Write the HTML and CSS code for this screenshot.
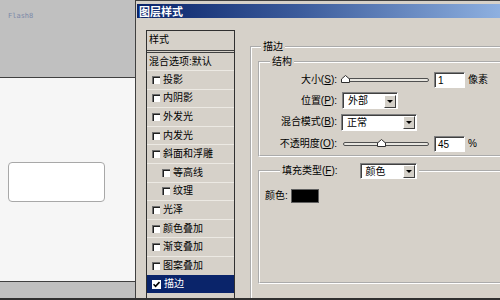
FILE: index.html
```html
<!DOCTYPE html>
<html>
<head>
<meta charset="utf-8">
<link rel="stylesheet" href="styles.css">
</head>
<body>
<div class="screen">
  <div class="left">
    <div class="lt"><span class="flash">Flash8</span></div>
    <div class="lm"><div class="card"></div></div>
    <div class="lb"></div>
  </div>
  <div class="dlg">
    <div class="title">图层样式</div>
    <div class="body">
      <div class="list">
        <div class="row head">样式</div>
        <div class="row blend">混合选项:默认</div>
        <div class="row item"><span class="cb"></span>投影</div>
        <div class="row item"><span class="cb"></span>内阴影</div>
        <div class="row item"><span class="cb"></span>外发光</div>
        <div class="row item"><span class="cb"></span>内发光</div>
        <div class="row item"><span class="cb"></span>斜面和浮雕</div>
        <div class="row item sub"><span class="cb"></span>等高线</div>
        <div class="row item sub"><span class="cb"></span>纹理</div>
        <div class="row item"><span class="cb"></span>光泽</div>
        <div class="row item"><span class="cb"></span>颜色叠加</div>
        <div class="row item"><span class="cb"></span>渐变叠加</div>
        <div class="row item"><span class="cb"></span>图案叠加</div>
        <div class="row item sel"><span class="cb on"><svg width="7" height="7" viewBox="0 0 7 7"><path d="M0.5 3.2 L2.6 5.4 L6.5 1" fill="none" stroke="#000" stroke-width="1.6"/></svg></span>描边</div>
      </div>
      <div class="panel">
        <fieldset class="grp outer">
          <legend class="lg lg-outer">描边</legend>
          <fieldset class="grp struct">
            <legend class="lg lg-struct">结构</legend>
            <div class="srow">
              <span class="lab">大小(<u>S</u>):</span>
              <div class="slider"><div class="track"></div><svg class="thumb t1" width="9" height="8" viewBox="0 0 9 8"><path d="M0.5 7.5 L0.5 4 L4.5 0.5 L8.5 4 L8.5 7.5 Z" fill="#fff" stroke="#303030"/></svg></div>
              <div class="inp">1</div>
              <span class="unit">像素</span>
            </div>
            <div class="srow">
              <span class="lab">位置(<u>P</u>):</span>
              <div class="dd dd-pos"><span class="ddt">外部</span><span class="ddb"><i class="arr"></i></span></div>
            </div>
            <div class="srow">
              <span class="lab">混合模式(<u>B</u>):</span>
              <div class="dd dd-mode"><span class="ddt">正常</span><span class="ddb"><i class="arr"></i></span></div>
            </div>
            <div class="srow">
              <span class="lab">不透明度(<u>O</u>):</span>
              <div class="slider"><div class="track"></div><svg class="thumb t2" width="9" height="8" viewBox="0 0 9 8"><path d="M0.5 7.5 L0.5 4 L4.5 0.5 L8.5 4 L8.5 7.5 Z" fill="#fff" stroke="#303030"/></svg></div>
              <div class="inp">45</div>
              <span class="unit">%</span>
            </div>
          </fieldset>
          <fieldset class="grp fill">
            <legend class="lg lg-fill"><span class="flab">填充类型(<u>F</u>):</span><span class="dd dd-fill"><span class="ddt">颜色</span><span class="ddb"><i class="arr"></i></span></span></legend>
            <div class="crow"><span>颜色:</span><span class="swatch"></span></div>
          </fieldset>
        </fieldset>
      </div>
    </div>
  </div>
</div>
</body>
</html>
```

FILE: styles.css
```css
html, body {
  margin: 0;
  padding: 0;
  background: #d4d0c8;
}
.screen {
  width: 500px;
  height: 300px;
  box-sizing: border-box;
  border-bottom: 2px solid #303030;
  overflow: hidden;
  display: flex;
  background: #d6d1c9;
  font-family: "Liberation Sans", "Noto Sans CJK SC", sans-serif;
  font-size: 10px;
  color: #000;
}
.left {
  width: 136px;
  flex: none;
  box-sizing: border-box;
  border-right: 1px solid #404040;
  display: flex;
  flex-direction: column;
}
.lt {
  height: 78px;
  box-sizing: border-box;
  background: #c0c0c0;
  border-bottom: 1px solid #404040;
  padding: 9px 0 0 8px;
}
.flash {
  font-family: "DejaVu Sans Mono", monospace;
  font-size: 7px;
  line-height: 7px;
  color: #7c88a8;
}
.lm {
  flex: 1;
  background: #f6f6f6;
  border-bottom: 1px solid #404040;
  padding: 84px 0 0 8px;
}
.card {
  width: 97px;
  height: 40px;
  box-sizing: border-box;
  border: 1.5px solid #a8a8a8;
  border-radius: 4px;
  background: #fff;
}
.lb {
  height: 16px;
  background: #c0c0c0;
}
.dlg {
  flex: 1;
  display: flex;
  flex-direction: column;
  border-top: 1px solid #404040;
  min-width: 0;
}
.title {
  margin: 3px 0 0 1px;
  height: 14px;
  line-height: 14px;
  padding-left: 2px;
  background: linear-gradient(to right, #0a246a, #3c5c9c 45%, #8eb0e0);
  color: #fff;
  font-family: "Noto Sans CJK SC", sans-serif;
  font-weight: bold;
  font-size: 11px;
}
.body {
  flex: 1;
  display: flex;
  padding-top: 12px;
  min-height: 0;
}
.list {
  width: 89px;
  flex: none;
  margin-left: 10px;
  box-sizing: border-box;
  border: 1px solid #303030;
  border-bottom: none;
  background: #d6d1c9;
}
.row {
  box-sizing: border-box;
  display: flex;
  align-items: center;
  white-space: nowrap;
  line-height: 12px;
}
.head {
  height: 22px;
  padding: 0 0 2px 2px;
  border-bottom: 3px double #404040;
}
.blend {
  height: 17px;
  padding-left: 2px;
}
.item {
  height: 18.6px;
  border-top: 1px solid #ece9e3;
  padding-left: 5px;
}
.item.sub {
  padding-left: 15px;
}
.cb {
  width: 8px;
  height: 8px;
  box-sizing: border-box;
  margin-right: 3px;
  background: #fff;
  border-top: 1px solid #707070;
  border-left: 1px solid #707070;
  box-shadow: inset 1px 1px 0 #202020;
  display: flex;
  align-items: center;
  justify-content: center;
}
.sel {
  background: #0a246a;
  color: #fff;
  border-top-color: #0a246a;
}
.cb.on {
  width: 9px;
  height: 9px;
  border: none;
  box-shadow: none;
  margin-right: 3px;
}
.panel {
  flex: 1;
  min-width: 0;
  padding: 10px 0 0 15px;
}
.grp {
  margin: 0;
  min-width: 0;
  border: 2px groove #fff;
}
.outer {
  width: 300px;
  box-sizing: border-box;
  padding: 1px 0 6px 6px;
  height: 290px;
}
.lg {
  padding: 0 2px;
  line-height: 14px;
  height: 14px;
  font-size: 10px;
}
.lg-outer {
  margin-left: 3px;
}
.struct {
  padding: 0 0 1px 0;
}
.lg-struct {
  margin-left: 10px;
}
.srow {
  display: flex;
  align-items: center;
  height: 21.3px;
  line-height: 12px;
  white-space: nowrap;
}
.lab {
  width: 79px;
  flex: none;
  box-sizing: border-box;
  text-align: right;
  padding-right: 2px;
}
u {
  text-decoration: underline;
  text-underline-offset: 1px;
}
.slider {
  width: 88px;
  height: 10px;
  margin-left: 2px;
  position: relative;
  flex: none;
}
.track {
  position: absolute;
  left: 2px;
  right: 0;
  top: 3px;
  height: 4px;
  box-sizing: border-box;
  border: 1px solid #505050;
  border-radius: 2px;
  background: #e8e6e0;
}
.thumb {
  position: absolute;
  top: 0;
}
.t1 { left: 0; }
.t2 { left: 36px; }
.inp {
  width: 31px;
  height: 16px;
  box-sizing: border-box;
  margin-left: 5px;
  background: #fff;
  border-top: 1px solid #808080;
  border-left: 1px solid #808080;
  border-right: 1px solid #fff;
  border-bottom: 1px solid #fff;
  box-shadow: inset 1px 1px 0 #404040;
  padding: 2px 0 0 3px;
  line-height: 12px;
  font-size: 10px;
  flex: none;
}
.unit {
  margin-left: 3px;
}
.dd {
  height: 17px;
  box-sizing: border-box;
  display: flex;
  align-items: center;
  justify-content: space-between;
  background: #fff;
  border-top: 1px solid #808080;
  border-left: 1px solid #808080;
  border-right: 1px solid #fff;
  border-bottom: 1px solid #fff;
  box-shadow: inset 1px 1px 0 #404040;
  padding: 1px 1px 0 5px;
  flex: none;
}
.dd-pos {
  width: 56px;
  margin-left: 3px;
}
.dd-mode {
  width: 76px;
  margin-left: 2px;
}
.dd-fill {
  width: 57px;
  margin-left: 22px;
  height: 16px;
}
.ddt {
  line-height: 12px;
}
.ddb {
  width: 12px;
  height: 13px;
  box-sizing: border-box;
  background: #d4d0c8;
  border-top: 1px solid #fff;
  border-left: 1px solid #fff;
  border-right: 1px solid #404040;
  border-bottom: 1px solid #404040;
  display: flex;
  align-items: center;
  justify-content: center;
}
.arr {
  width: 0;
  height: 0;
  border-left: 3px solid transparent;
  border-right: 3px solid transparent;
  border-top: 3px solid #000;
}
.fill {
  margin-top: 6px;
  height: 121px;
  box-sizing: border-box;
  padding: 10px 0 0 5px;
}
.lg-fill {
  margin-left: 15px;
  padding: 0 2px;
  height: 16px;
  line-height: 16px;
  display: flex;
  align-items: center;
}
.flab {
  line-height: 12px;
}
.crow {
  display: flex;
  align-items: center;
  height: 14px;
  line-height: 12px;
}
.swatch {
  width: 28px;
  height: 14px;
  box-sizing: border-box;
  margin-left: 3px;
  background: #000;
  border: 1px solid #606060;
}
```
